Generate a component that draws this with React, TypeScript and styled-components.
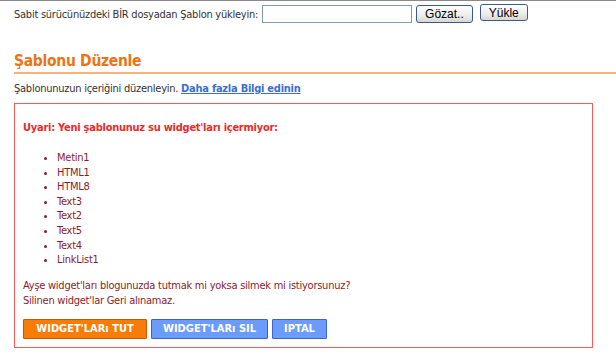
import React from 'react'
import styled, { createGlobalStyle } from 'styled-components'

const GlobalStyle = createGlobalStyle`
  body {
    margin: 0;
    background: #fff;
    font-family: "DejaVu Sans Condensed", "DejaVu Sans", Tahoma, sans-serif;
    font-size: 11px;
    letter-spacing: -0.25px;
    color: #333;
  }
`

const Page = styled.div`
  border-top: 1px solid #8a8a8a;
  padding: 0 0 0 14px;
  width: 616px;
  box-sizing: border-box;
`

const UploadRow = styled.div`
  display: flex;
  align-items: center;
  height: 26px;
  gap: 4px;
`

const UploadLabel = styled.span`
  color: #333;
`

const FileInput = styled.div`
  width: 148px;
  height: 16px;
  border: 1px solid #7f9db9;
  background: #fff;
`

const XpButton = styled.button<{ $raised?: boolean }>`
  font-family: "Liberation Sans", Arial, sans-serif;
  font-size: 12px;
  letter-spacing: 0;
  color: #000;
  height: ${p => (p.$raised ? '17px' : '18px')};
  margin-top: ${p => (p.$raised ? '-3px' : '0')};
  margin-left: ${p => (p.$raised ? '3px' : '0')};
  padding: 0 8px;
  border: 1px solid #3c5a86;
  border-radius: 3px;
  background: linear-gradient(#ffffff, #ececec 60%, #d8d8d0);
  line-height: 14px;
`

const Heading = styled.h2`
  margin: 23px 0 0 0;
  padding: 0;
  font-size: 15.5px;
  font-weight: bold;
  letter-spacing: -0.3px;
  color: #ed7412;
  line-height: 22px;
  border-bottom: 2px solid #fbb07a;
`

const Intro = styled.p`
  margin: 7px 0 0 0;
  line-height: 15px;
  color: #333;
`

const InfoLink = styled.a`
  color: #3a6fd0;
  font-weight: bold;
  text-decoration: underline;
`

const WarningBox = styled.div`
  margin-top: 7px;
  width: 579px;
  box-sizing: border-box;
  border: 1px solid #fb5a5a;
  padding: 16px 8px 8px 8px;
`

const WarningTitle = styled.div`
  color: #ea2b2b;
  font-weight: bold;
  line-height: 15px;
`

const WidgetList = styled.ul`
  margin: 16px 0 0 0;
  padding: 0 0 0 34px;
  color: #8b1c2c;
  line-height: 14.6px;
`

const Question = styled.p`
  margin: 10px 0 0 0;
  color: #8b1c2c;
  line-height: 15px;
`

const ActionRow = styled.div`
  display: flex;
  gap: 4px;
  margin-top: 11px;
`

const ActionButton = styled.button<{ $tone: 'orange' | 'blue'; $w: number }>`
  width: ${p => p.$w}px;
  height: 20px;
  padding: 0;
  font-family: "DejaVu Sans Condensed", "DejaVu Sans", Tahoma, sans-serif;
  font-size: 11px;
  font-weight: bold;
  letter-spacing: 0;
  color: #fff;
  border: 1px solid ${p => (p.$tone === 'orange' ? '#c25c00' : '#3e63c4')};
  background: ${p => (p.$tone === 'orange' ? '#f77c08' : '#6b9bfb')};
  border-radius: 1px;
`

const widgets = ['Metin1', 'HTML1', 'HTML8', 'Text3', 'Text2', 'Text5', 'Text4', 'LinkList1']

const App: React.FC = () => {
  return (
    <Page>
      <GlobalStyle />
      <UploadRow>
        <UploadLabel>Sabit sürücünüzdeki BİR dosyadan Şablon yükleyin:</UploadLabel>
        <FileInput />
        <XpButton>Gözat..</XpButton>
        <XpButton $raised>Yükle</XpButton>
      </UploadRow>
      <Heading>Şablonu Düzenle</Heading>
      <Intro>
        Şablonunuzun içeriğini düzenleyin. <InfoLink href="#">Daha fazla Bilgi edinin</InfoLink>
      </Intro>
      <WarningBox>
        <WarningTitle>Uyari: Yeni şablonunuz su widget'ları içermiyor:</WarningTitle>
        <WidgetList>
          {widgets.map(w => (
            <li key={w}>{w}</li>
          ))}
        </WidgetList>
        <Question>
          Ayşe widget'ları blogunuzda tutmak mi yoksa silmek mi istiyorsunuz?
          <br />
          Silinen widget'lar Geri alınamaz.
        </Question>
        <ActionRow>
          <ActionButton $tone="orange" $w={124}>WIDGET'LARı TUT</ActionButton>
          <ActionButton $tone="blue" $w={117}>WIDGET'LARı SIL</ActionButton>
          <ActionButton $tone="blue" $w={55}>IPTAL</ActionButton>
        </ActionRow>
      </WarningBox>
    </Page>
  )
}

export default App
